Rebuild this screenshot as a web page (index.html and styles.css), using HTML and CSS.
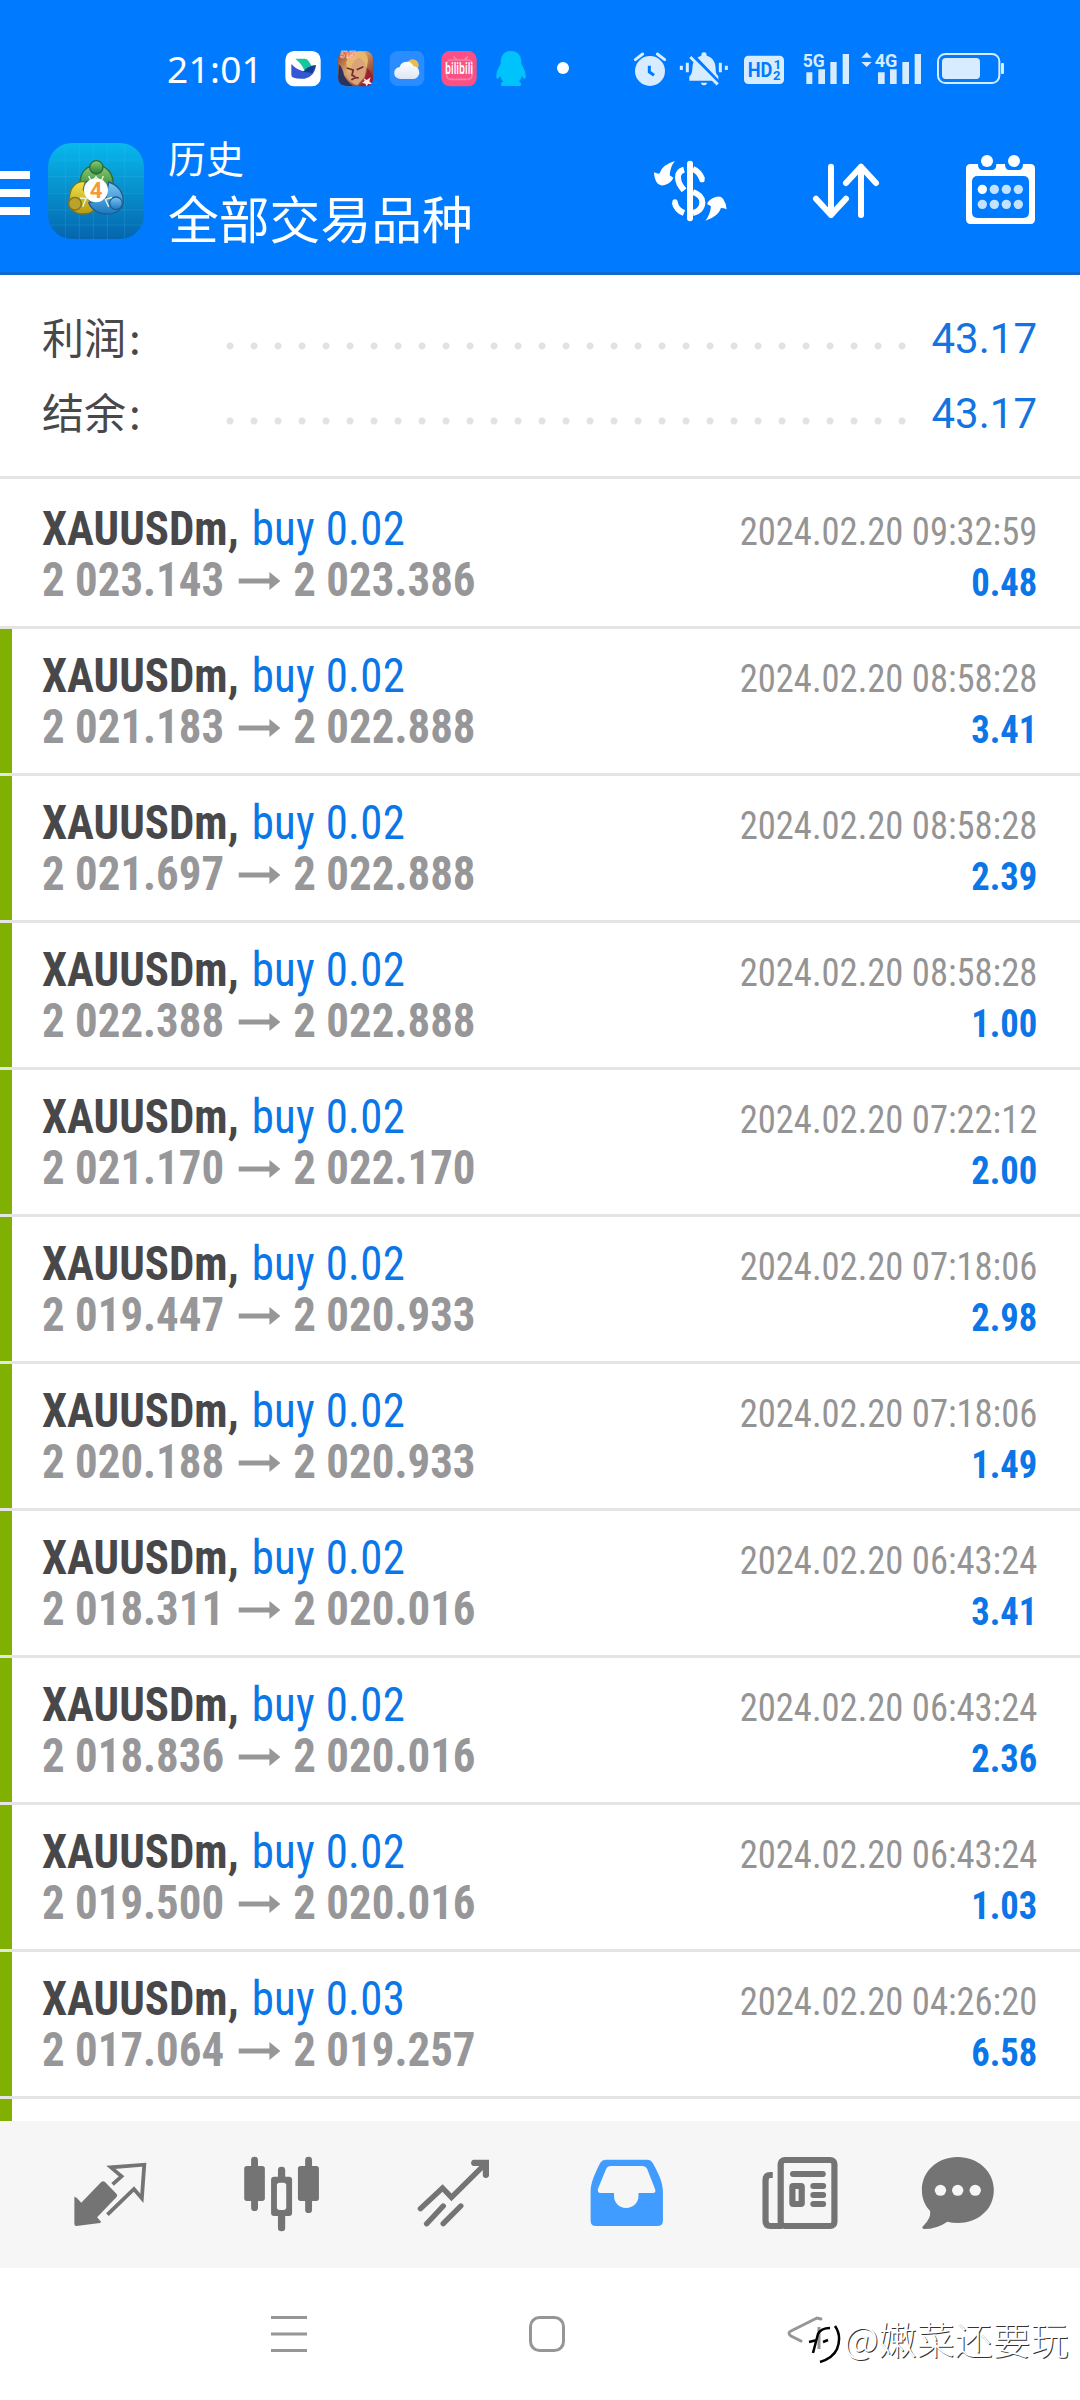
FILE: index.html
```html
<!DOCTYPE html>
<html lang="zh-CN">
<head>
<meta charset="utf-8">
<title>历史</title>
<link rel="stylesheet" href="styles.css">
</head>
<body>
<svg class="defs" width="0" height="0">
  <symbol id="arrow" viewBox="0 0 42 18" preserveAspectRatio="none"><path d="M0 6.500H31V0L42 9 31 18V11.500H0z" fill="#979799"/></symbol>
</svg>
<header class="header">
  <div class="status">
    <span class="clock">21:01</span>
    <svg class="notif" viewBox="390 0 890 180">
      <defs>
        <linearGradient id="hair" x1="0" y1="0" x2="1" y2="1"><stop offset="0" stop-color="#8c3a2c"/><stop offset=".4" stop-color="#d9a066"/><stop offset="1" stop-color="#6a1420"/></linearGradient>
        <linearGradient id="cloud" x1="0" y1="0" x2="0" y2="1"><stop offset="0" stop-color="#fff"/><stop offset="1" stop-color="#dbe6f5"/></linearGradient>
      </defs>
      <rect x="406" y="33" width="106" height="106" rx="26" fill="#fff"/>
      <path d="M436 56h28q10 0 16 14l5 8q-12 2-20 17-8-22-29-39z" fill="#12c99b"/>
      <path d="M424 72q20 22 42 22 10-18 32-18-3 34-34 40-40 2-40-10z" fill="#3458d4"/>
      <path d="M460 96q12-20 38-20-6 14-12 24-12-4-26-4z" fill="#163c92"/>
      <rect x="564" y="33" width="105" height="106" rx="24" fill="url(#hair)"/>
      <path d="M598 52q20-18 44-8 12 30 2 66l-22 26q-26-8-34-34-2-26 10-50z" fill="#dba37b"/>
      <path d="M588 68q8-30 38-34 26-2 28 26l-4 28q-4-24-20-34-20 0-28 34l-6 14z" fill="#e7b86c"/>
      <path d="M590 84l20 6m10-1l20-9M604 120q12-10 22-6m-16-26l-4 18 10 4" stroke="#6d2e2a" stroke-width="5" fill="none"/>
      <path d="M566 72q12 10 16 34 10 20 28 32h-22q-24-3-24-24z" fill="#28345f"/>
      <path d="M652 84q14 12 16 34 0 20-20 21l-20-1q22-20 24-54z" fill="#9c1f32"/>
      <path d="M640 114l10 6 12-8-4 12 8 8-12 0-4 7-4-8-10-3 8-5z" fill="#ffe9df"/>
      <text x="570" y="55" class="badge">5V5</text>
      <rect x="719" y="33" width="104" height="105" rx="24" fill="#2b8cff"/>
      <circle cx="788" cy="76" r="18" fill="#e9bd4b"/>
      <path d="M752 117a18 18 0 0 1-3-36 22 22 0 0 1 41-3 19 19 0 0 1-3 39z" fill="url(#cloud)"/>
      <rect x="874" y="33" width="106" height="106" rx="25" fill="#fb4f86"/>
      <rect x="890" y="60" width="76" height="58" rx="12" fill="none" stroke="#fb80a5" stroke-width="5"/>
      <path d="M910 49l10 10m24 0 10-10" stroke="#fb80a5" stroke-width="5"/>
      <text x="885" y="103" class="bili" textLength="84" lengthAdjust="spacingAndGlyphs">bilibili</text>
      <path d="M1083 33c22 0 32 16 31 38 8 14 15 30 13 41-1 8-7 3-12-4-1 6-4 12-8 16 9 7 8 14 0 14h-48c-8 0-9-7 0-14-4-4-7-10-8-16-5 7-11 12-12 4-2-11 5-27 13-41-1-22 9-38 31-38z" fill="#00c3fb"/>
      <circle cx="1239" cy="84" r="18" fill="#fff"/>
    </svg>
    <svg class="system" viewBox="90 0 1140 180" fill="#d8ecff">
      <circle cx="150" cy="93" r="45"/>
      <path d="M106 59l22-17M194 59l-22-17" stroke="#d8ecff" stroke-width="9" stroke-linecap="round"/>
      <path d="M148 77v19l14 10" fill="none" stroke="#007aff" stroke-width="9"/>
      <path d="M268 122v-13q9-8 9-23 0-32 27-39 0-10 8-10t8 10c18 5 27 19 27 41 0 10 2 15 8 20v14zM302 128h20q-3 8-10 8t-10-8z"/>
      <path d="M274 44l78 82" stroke="#007aff" stroke-width="15"/>
      <path d="M271 51l82 82" stroke="#d8ecff" stroke-width="9"/>
      <path d="M244 77v13M262 68v29M361 68v29M379 77v13" stroke="#d8ecff" stroke-width="9"/>
      <rect x="432" y="47" width="120" height="85" rx="13"/>
      <text x="443" y="112" class="hd" textLength="74" lengthAdjust="spacingAndGlyphs">HD</text>
      <text x="521" y="86" class="sim">1</text><text x="519" y="121" class="sim">2</text>
      <text x="608" y="80" class="net" textLength="66" lengthAdjust="spacingAndGlyphs">5G</text>
      <path d="M619 97h18v35h-18zM655 88h20v44h-20zM691 66h19v66h-19zM728 42h19v90h-19z"/>
      <text x="824" y="80" class="net" textLength="68" lengthAdjust="spacingAndGlyphs">4G</text>
      <path d="M834 97h20v35h-20zM870 88h20v44h-20zM907 66h20v66h-20zM944 42h19v90h-19zM784 53l16-16 15 16zM784 66h31l-15 15z"/>
      <rect x="1014" y="42" width="184" height="87" rx="22" fill="none" stroke="#d8ecff" stroke-width="6"/>
      <rect x="1026" y="54" width="114" height="63" rx="11"/>
      <rect x="1203" y="69" width="9" height="33" rx="3"/>
    </svg>
  </div>
  <div class="toolbar">
    <span class="menu"><i></i><i></i><i></i></span>
    <svg class="logo" viewBox="144 69 288 288">
      <defs>
        <linearGradient id="tile" x1="0" y1="0" x2="0" y2="1"><stop offset="0" stop-color="#08b8ee"/><stop offset=".5" stop-color="#078fcb"/><stop offset="1" stop-color="#0565ae"/></linearGradient>
        <linearGradient id="lg" x1="0" y1="0" x2="0" y2="1"><stop offset="0" stop-color="#8dcc76"/><stop offset="1" stop-color="#247e32"/></linearGradient>
        <linearGradient id="ly" x1="0" y1="0" x2="0" y2="1"><stop offset="0" stop-color="#f2e24c"/><stop offset="1" stop-color="#b49a12"/></linearGradient>
        <linearGradient id="lb" x1="0" y1="0" x2="0" y2="1"><stop offset="0" stop-color="#7ec7f0"/><stop offset="1" stop-color="#1b78c4"/></linearGradient>
      </defs>
      <rect x="144" y="69" width="288" height="288" rx="72" fill="url(#tile)"/>
      <path d="M196 72v282M238 69v288M280 69v288M322 69v288M374 72v282M147 120h282M144 170h288M144 220h288M144 270h288M150 315h276" stroke="#4bc4ef" stroke-opacity=".3" stroke-width="2"/>
      <g stroke-width="4">
        <path d="M240 190c0-34 20-54 50-54s50 24 50 58l-10 24-40-42z" fill="url(#lg)" stroke="#2e6c30"/>
        <path d="M256 184c-30 0-46 16-48 52-6 26 14 46 40 46 16 0 30-4 34-14l-32-60z" fill="url(#ly)" stroke="#7b7420"/>
        <path d="M326 186c28 8 44 32 44 58 0 24-22 38-50 38-26 0-46-14-54-34l52-12z" fill="url(#lb)" stroke="#235d91"/>
        <circle cx="289" cy="142" r="20" fill="url(#lg)" stroke="#2e6c30"/>
        <circle cx="225" cy="251" r="19" fill="#b9a32a" stroke="#7b7420"/>
        <circle cx="348" cy="250" r="19" fill="url(#lb)" stroke="#235d91"/>
      </g>
      <path d="M266 168l10 20 12-18 14 18 8-20M240 234l18 2-10 24M336 232l-20 6 10 22" fill="none" stroke="#e9f7df" stroke-width="4"/>
      <circle cx="288" cy="211" r="36" fill="#fff"/>
      <text x="269" y="235" class="four">4</text>
    </svg>
    <div class="titles"><span class="sub">历史</span><span class="main">全部交易品种</span></div>
    <svg class="actions" viewBox="0 0 1380 288" fill="none" stroke="#fff">
      <path d="M102 127q8 4 16 4 8-27 47-38-14 15-16 43l11 7q-5 14-26 22-14 4-22-5-10-14-10-33zM320 238q-8-4-17-4-8 26-47 38 14-16 17-43l-12-7q5-14 26-21 15-4 22 5 10 14 11 32z" fill="#fff" stroke="none"/>
      <path d="M192 119q-18 5-18 22c0 18 7 26 18 40M192 249q-23-9-28-32M219 117q18 7 28 31M219 186c18 6 28 15 28 31 0 17-12 29-28 32" stroke-width="18"/>
      <circle cx="246" cy="149" r="8" fill="#fff" stroke="none"/><circle cx="165" cy="216" r="8" fill="#fff" stroke="none"/>
      <path d="M210 101v164" stroke-width="18" stroke-linecap="round"/>
      <g stroke-width="18" stroke-linecap="round" stroke-linejoin="round"><path d="M633 110v145M588 206l45 49 45-49M723 255V110M678 159l45-49 45 49"/></g>
      <path d="M1052 102h22q0 18 14 18h28q13 0 13-18h26q0 18 14 18h26q14 0 14-18h22q14 0 14 14v152q0 14-14 14h-179q-14 0-14-14V116q0-14 14-14zM1073 138q-17 0-17 17v92q0 17 17 17h137q17 0 17-17v-92q0-17-17-17z" fill="#fff" fill-rule="evenodd" stroke="none"/>
      <g fill="#fff" stroke="none"><circle cx="1101" cy="93" r="18"/><circle cx="1182" cy="93" r="18"/><circle cx="1087" cy="178" r="14"/></g>
      <g fill="#c3e2ff" stroke="none"><circle cx="1123" cy="178" r="14"/><circle cx="1159" cy="178" r="14"/><circle cx="1195" cy="178" r="14"/><circle cx="1087" cy="223" r="14"/><circle cx="1123" cy="223" r="14"/><circle cx="1159" cy="223" r="14"/><circle cx="1195" cy="223" r="14"/></g>
    </svg>
  </div>
</header>
<main class="content">
  <section class="summary">
    <div class="sum"><span class="label">利润<i>:</i></span><span class="dots"></span><span class="value">43.17</span></div>
    <div class="sum"><span class="label">结余<i>:</i></span><span class="dots"></span><span class="value">43.17</span></div>
  </section>
  <section class="deals">
    <article class="deal plain"><div class="left"><p class="sym"><b>XAUUSDm,</b><span>buy 0.02</span></p><p class="price"><b>2 023.143</b><svg><use href="#arrow"/></svg><b>2 023.386</b></p></div><div class="right"><time>2024.02.20 09:32:59</time><strong>0.48</strong></div></article>
    <article class="deal"><div class="left"><p class="sym"><b>XAUUSDm,</b><span>buy 0.02</span></p><p class="price"><b>2 021.183</b><svg><use href="#arrow"/></svg><b>2 022.888</b></p></div><div class="right"><time>2024.02.20 08:58:28</time><strong>3.41</strong></div></article>
    <article class="deal"><div class="left"><p class="sym"><b>XAUUSDm,</b><span>buy 0.02</span></p><p class="price"><b>2 021.697</b><svg><use href="#arrow"/></svg><b>2 022.888</b></p></div><div class="right"><time>2024.02.20 08:58:28</time><strong>2.39</strong></div></article>
    <article class="deal"><div class="left"><p class="sym"><b>XAUUSDm,</b><span>buy 0.02</span></p><p class="price"><b>2 022.388</b><svg><use href="#arrow"/></svg><b>2 022.888</b></p></div><div class="right"><time>2024.02.20 08:58:28</time><strong>1.00</strong></div></article>
    <article class="deal"><div class="left"><p class="sym"><b>XAUUSDm,</b><span>buy 0.02</span></p><p class="price"><b>2 021.170</b><svg><use href="#arrow"/></svg><b>2 022.170</b></p></div><div class="right"><time>2024.02.20 07:22:12</time><strong>2.00</strong></div></article>
    <article class="deal"><div class="left"><p class="sym"><b>XAUUSDm,</b><span>buy 0.02</span></p><p class="price"><b>2 019.447</b><svg><use href="#arrow"/></svg><b>2 020.933</b></p></div><div class="right"><time>2024.02.20 07:18:06</time><strong>2.98</strong></div></article>
    <article class="deal"><div class="left"><p class="sym"><b>XAUUSDm,</b><span>buy 0.02</span></p><p class="price"><b>2 020.188</b><svg><use href="#arrow"/></svg><b>2 020.933</b></p></div><div class="right"><time>2024.02.20 07:18:06</time><strong>1.49</strong></div></article>
    <article class="deal"><div class="left"><p class="sym"><b>XAUUSDm,</b><span>buy 0.02</span></p><p class="price"><b>2 018.311</b><svg><use href="#arrow"/></svg><b>2 020.016</b></p></div><div class="right"><time>2024.02.20 06:43:24</time><strong>3.41</strong></div></article>
    <article class="deal"><div class="left"><p class="sym"><b>XAUUSDm,</b><span>buy 0.02</span></p><p class="price"><b>2 018.836</b><svg><use href="#arrow"/></svg><b>2 020.016</b></p></div><div class="right"><time>2024.02.20 06:43:24</time><strong>2.36</strong></div></article>
    <article class="deal"><div class="left"><p class="sym"><b>XAUUSDm,</b><span>buy 0.02</span></p><p class="price"><b>2 019.500</b><svg><use href="#arrow"/></svg><b>2 020.016</b></p></div><div class="right"><time>2024.02.20 06:43:24</time><strong>1.03</strong></div></article>
    <article class="deal"><div class="left"><p class="sym"><b>XAUUSDm,</b><span>buy 0.03</span></p><p class="price"><b>2 017.064</b><svg><use href="#arrow"/></svg><b>2 019.257</b></p></div><div class="right"><time>2024.02.20 04:26:20</time><strong>6.58</strong></div></article>
    <article class="deal"></article>
  </section>
</main>
<nav class="tabs">
  <svg viewBox="69.700 183 499.500 441" preserveAspectRatio="none"><path d="M216 410q5-1 20 18l58-62q6-5 11 0l33 35q5 5 0 11l-56 60 12 14-4 3-68 9q-6 0-6-6z" fill="#747474"/><path d="M327 373l26-24-31-27 97-8-7 101-23-28-77 77" fill="none" stroke="#747474" stroke-width="11"/></svg>
  <svg viewBox="569 183 499.500 441" preserveAspectRatio="none" fill="#747474"><rect x="729" y="290" width="20" height="163" rx="10"/><rect x="709" y="318" width="60" height="105" rx="8"/><rect x="886" y="290" width="20" height="169" rx="10"/><rect x="865" y="318" width="61" height="105" rx="8"/><rect x="807" y="320" width="21" height="194" rx="10"/><rect x="787" y="350" width="61" height="118" rx="9"/><rect x="804" y="368" width="27" height="82" rx="8" fill="#f6f6f6"/></svg>
  <svg viewBox="1068.600 183 499.500 441" preserveAspectRatio="none" fill="none" stroke="#747474" stroke-width="16" stroke-linecap="round"><path d="M1221 446l64-62 26 28 96-98M1239 491l48-53M1287 491l51-53"/><path d="M1376 299h44v47q-1 8-9 8-9-1-9-8v-28h-26q-8-1-8-9 0-9 8-10z" fill="#747474" stroke="none"/></svg>
  <svg viewBox="0 183 499.500 441" preserveAspectRatio="none"><path d="M190 299h123q9 0 14 9c18 34 30 58 30 88v86q0 16-16 16H163q-16 0-16-16v-86c0-30 12-54 28-88q6-9 15-9zM206 318q-10 0-14 9l-23 58q-5 14 8 14h38v9c0 20 15 36 35 36s36-16 36-36v-9h42q10 0 6-12l-23-61q-4-8-13-8z" fill="#419cff" fill-rule="evenodd"/></svg>
  <svg viewBox="499.500 183 499.500 441" preserveAspectRatio="none" fill="none" stroke="#747474" stroke-width="18"><rect x="699" y="300" width="156" height="198" rx="12"/><path d="M676 345h-7q-14 0-14 16v121q0 16 14 16h34"/><path d="M735 342h86M794 378h28M794 405h28M794 432h28" stroke-linecap="round"/><rect x="733" y="378" width="27" height="54" rx="2"/></svg>
  <svg viewBox="999 183 499.500 441" preserveAspectRatio="none"><path d="M1213 291c58 0 105 42 105 99 0 61-49 99-105 99q-16 0-30-4-30 22-69 22-7-4-1-9 23-23 20-45c-16-17-24-38-24-63 0-57 46-99 104-99z" fill="#747474"/><g fill="#f6f6f6"><circle cx="1163" cy="391" r="16.500"/><circle cx="1213" cy="391" r="16.500"/><circle cx="1264" cy="391" r="16.500"/></g></svg>
</nav>
<footer class="system-nav">
  <svg viewBox="0 2268 1080 132" fill="none" stroke="#969696" stroke-width="3"><path d="M271 2317.500h36M271 2334h36M271 2350.500h36"/><rect x="530.500" y="2317.500" width="33" height="33" rx="9"/><path d="M821 2319l-4-1-26 13q-4 2 0 5l10 5" stroke-linecap="round"/><path d="M819 2327v22"/></svg>
  <div class="watermark"><svg viewBox="0 0 34 44" fill="none" stroke="#000"><path d="M22 7q-9 0-12 6L5 32M1 21l8-2M15 21l5-2" stroke-width="2.500"/><path d="M27 5q7 10 2 23-4 9-17 13" stroke-width="2.500"/></svg><span><b>@</b>嫩菜还要玩</span></div>
</footer>
</body>
</html>
```
FILE: styles.css
```css
* { box-sizing: border-box; }
body { margin: 0; width: 1080px; height: 2400px; overflow: hidden; display: flex; flex-direction: column; background: #fff; font-family: Roboto, "Noto Sans CJK SC", sans-serif; }
p { margin: 0; }
svg { display: block; flex: none; }
.defs { display: none; }
.header { height: 275px; flex: none; background: #007aff; border-bottom: 3px solid #1268cf; color: #fff; }
.status { height: 120px; padding: 40px 0 0 167px; display: flex; }
.clock { width: 113px; font: 400 37px/57px "Noto Sans", sans-serif; letter-spacing: .3px; }
.notif { width: 296.700px; height: 60px; }
.system { width: 380px; height: 60px; margin-left: 53.300px; }
.badge { font: italic 900 26px Roboto, sans-serif; fill: #ff5a3c; stroke: #fff; stroke-width: 1px; }
.bili { font: 600 46px "Noto Sans", sans-serif; fill: #fff; }
.hd { font: bold 62px Roboto, sans-serif; fill: #007aff; }
.sim { font: bold 39px Roboto, sans-serif; fill: #007aff; }
.net { font: bold 57px Roboto, sans-serif; fill: #d8ecff; }
.toolbar { height: 152px; display: flex; }
.menu { width: 30px; margin-top: 51px; display: flex; flex-direction: column; gap: 10px; }
.menu i { height: 8px; background: #fff; }
.logo { width: 96px; height: 96px; margin: 23px 0 0 18px; }
.four { font: bold 66px Roboto, sans-serif; fill: #f39b3a; }
.titles { width: 452px; margin: 12px 0 0 24px; display: flex; flex-direction: column; font-family: "Noto Sans CJK SC", sans-serif; white-space: nowrap; }
.sub { font-size: 38px; line-height: 50px; }
.main { font-size: 50.800px; line-height: 70px; }
.actions { width: 460px; height: 96px; margin-top: 10px; }
.content { height: 1846px; overflow: hidden; flex: none; }
.summary { height: 204px; padding: 26px 43px 0 42px; border-bottom: 3px solid #e4e4e4; }
.sum { height: 75px; display: flex; align-items: center; color: #48484a; }
.label { width: 176px; height: 75px; font: 42px/69px "Noto Sans CJK SC", sans-serif; }
.label i { font-style: normal; margin-left: 3px; }
.dots { width: 696px; height: 75px; background: radial-gradient(circle at 12px 45px, #e2e2e2 3px, transparent 4px) 0 0 / 24px 75px; }
.value { margin-left: auto; font-size: 42px; color: #1474df; }
.deal { height: 147px; padding: 21px 43px 0 42px; display: flex; justify-content: space-between; background: linear-gradient(#7fb002, #7fb002) no-repeat 0 0 / 12px 144px; border-bottom: 3px solid #e4e4e4; white-space: nowrap; }
.plain { height: 150px; padding-top: 24px; background: none; }
.left { font: 48px/51px "Roboto Condensed", Roboto, sans-serif; transform: scaleX(.935); transform-origin: left; }
.sym { display: flex; gap: 14px; color: #48484a; }
.sym span { color: #0b76e8; letter-spacing: .3px; }
.price { display: flex; color: #979799; }
.price svg { width: 45px; height: 18px; margin: 18px 14px 0 15px; }
.right { padding-top: 4px; display: flex; flex-direction: column; align-items: flex-end; font: 39px/51px "Roboto Condensed", Roboto, sans-serif; transform: scaleX(.938); transform-origin: right; }
.right time { color: #949494; }
.right strong { color: #0b76e8; }
.tabs { height: 147px; flex: none; padding-left: 24px; display: flex; background: #f6f6f6; }
.tabs svg { width: 172px; height: 147px; }
.system-nav { height: 132px; flex: none; position: relative; }
.watermark { position: absolute; left: 808px; top: 53px; height: 44px; display: flex; align-items: flex-start; gap: 2px; }
.watermark svg { width: 34px; height: 44px; }
.watermark span { font: 300 38px/33px "Noto Sans CJK SC", sans-serif; color: #fff; text-shadow: 1px 1px 0 #333; white-space: nowrap; }
.watermark b { font-weight: 300; }
```
